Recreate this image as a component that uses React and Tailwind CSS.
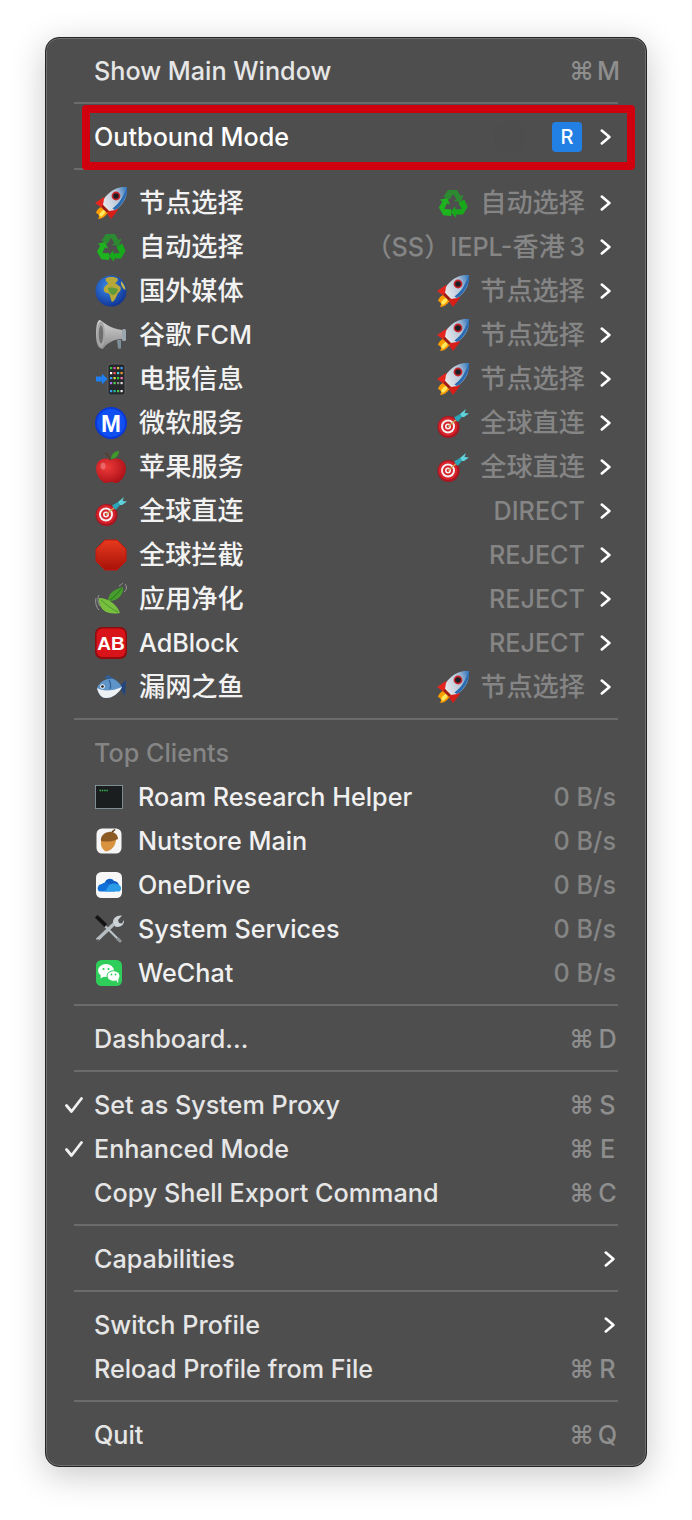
import React from 'react';

const Rocket = () => (
  <svg viewBox="0 0 32 32" className="w-8 h-8 shrink-0">
    <defs>
      <linearGradient id="rk" x1="0" y1="0.6" x2="1" y2="0.2">
        <stop offset="0" stopColor="#e3e6ea" />
        <stop offset="0.6" stopColor="#b4c4d6" />
        <stop offset="1" stopColor="#3f7dbf" />
      </linearGradient>
    </defs>
    <path d="M0 16 L9 10 L13 14 L7 21 Z" fill="#e5261f" />
    <path d="M16 32 L23 23 L19 19 L11 25 Z" fill="#d81e18" />
    <path d="M1 26 C2 22 6 19 10 19 L14 23 C13 27 8 32 3 32 C5 29 4 27 1 26 Z" fill="#ff9d00" />
    <path d="M4 28 C5 25 8 23 10 22 L11 24 C10 27 8 28 6 30 Z" fill="#ffe95c" />
    <path d="M32 0 C23 -1 14 4 9 12 L8 18 L14 24 L20 23 C28 18 33 10 32 0 Z" fill="url(#rk)" />
    <path d="M32 0 C32.500 8 28 18 20 23 L17.500 21.500 C25 16 29 8 32 0 Z" fill="#2a6bb2" />
    <circle cx="21" cy="9" r="4.400" fill="#c9242a" />
    <circle cx="21" cy="9" r="2.800" fill="#1d1d24" />
    <path d="M8 18 L14 24 L12 26 L6 20 Z" fill="#9c1c1a" />
  </svg>
);

const RecycleArrow = ({ fill, rotate }) => (
  <path
    d="M11 3 L20 3 L23.500 9 L26.500 7.500 L24 15 L16.500 14 L19.500 12.200 L16 7 L12.500 12.800 L6.500 9.500 Z"
    fill={fill}
    transform={`rotate(${rotate} 16 17)`}
  />
);

const Recycle = () => (
  <svg viewBox="0 0 32 32" className="w-8 h-8 shrink-0">
    <RecycleArrow fill="#2c8b31" rotate={0} />
    <RecycleArrow fill="#17a81b" rotate={120} />
    <RecycleArrow fill="#1eb41f" rotate={240} />
  </svg>
);

const Globe = () => (
  <svg viewBox="0 0 32 32" className="w-8 h-8 shrink-0">
    <defs>
      <radialGradient id="gb" cx="0.4" cy="0.35" r="0.75">
        <stop offset="0" stopColor="#3a8ae8" />
        <stop offset="1" stopColor="#0b2a8c" />
      </radialGradient>
    </defs>
    <circle cx="16" cy="16" r="15.500" fill="url(#gb)" />
    <path d="M11 3 C14 1.500 19 1.500 22 3 C24 5 22 7 20 8 L24 11 C27 12 26 16 23 18 C21 22 20 26 17 27 C15 24 16 20 13 18 C10 18 8 16 9 13 C10 10 13 10 13 8 C11 7 10 5 11 3 Z" fill="#b8a83a" />
    <path d="M13 13 C16 12 20 13 23 14 C22 18 20 20 17 20 C15 18 13 16 13 13 Z" fill="#5f9a3a" />
    <path d="M26 6 C29 9 30.500 12 30.500 15 C28 14 26.500 11 26 9 Z" fill="#c2b24a" />
  </svg>
);

const Megaphone = () => (
  <svg viewBox="0 0 32 32" className="w-8 h-8 shrink-0">
    <defs>
      <linearGradient id="mg" x1="0" y1="0" x2="0" y2="1">
        <stop offset="0" stopColor="#d4d4d4" />
        <stop offset="1" stopColor="#8b8b8b" />
      </linearGradient>
    </defs>
    <path d="M22 21 L26 21 L26 29 C26 30 23 30 23 29 Z" fill="#7f8f99" />
    <path d="M5 1 C8 3 16 10 27 11 L28 20 C18 20 11 25 8 30 C3 30 1 24 1 16 C1 8 2 1 5 1 Z" fill="url(#mg)" />
    <ellipse cx="6" cy="15.500" rx="4" ry="13" fill="#a5a5a5" />
    <ellipse cx="6" cy="15.500" rx="2.200" ry="9" fill="#6f6f6f" />
    <rect x="27" y="10" width="4" height="12" rx="1.500" fill="#9aa7ae" />
  </svg>
);

const phoneDots = ['#2ecc40', '#e04bb0', '#e0c040', '#3aa0ff', '#ffffff', '#ff5050', '#3ad0d0', '#f0a030', '#3aa0ff', '#e0e040', '#2ecc40', '#ff70b0', '#b070ff', '#50d050', '#888888', '#dddddd', '#3aa0ff', '#20c0a0', '#50c050', '#eeeeee'];

const Phone = () => (
  <svg viewBox="0 0 32 32" className="w-8 h-8 shrink-0">
    <rect x="13" y="1" width="17" height="31" rx="2.500" fill="#26282b" stroke="#666" strokeWidth="0.8" />
    {phoneDots.map((c, i) => (
      <rect key={i} x={15 + (i % 4) * 3.5} y={4 + Math.floor(i / 4) * 5 + (i >= 16 ? 3 : 0)} width="2.2" height="2.2" fill={c} />
    ))}
    <path d="M1 13.500 L7 13.500 L7 10.500 L12.500 16 L7 21.500 L7 18.500 L1 18.500 Z" fill="#1f7ef0" />
  </svg>
);

const MCircle = () => (
  <svg viewBox="0 0 32 32" className="w-8 h-8 shrink-0">
    <circle cx="16" cy="16" r="16" fill="#0a37d8" />
    <circle cx="16" cy="16" r="14" fill="#1050f0" />
    <text x="16" y="24.500" textAnchor="middle" fontSize="24" fontWeight="900" fill="#fff" fontFamily="Liberation Sans, sans-serif">M</text>
  </svg>
);

const Apple = () => (
  <svg viewBox="0 0 32 32" className="w-8 h-8 shrink-0">
    <defs>
      <radialGradient id="ap" cx="0.35" cy="0.35" r="0.8">
        <stop offset="0" stopColor="#f03a3a" />
        <stop offset="1" stopColor="#a30c14" />
      </radialGradient>
    </defs>
    <path d="M16 9 C11 6 2 7 1 17 C1 25 7 32 11 32 C13 32 14 31 16 31 C18 31 19 32 21 32 C25 32 31 25 31 17 C30 7 21 6 16 9 Z" fill="url(#ap)" />
    <path d="M10 2 C12 3 14 5 15 9" stroke="#5c3a1c" strokeWidth="1.2" fill="none" />
    <path d="M16 8 C16 3 20 0 24 0 C24 4 21 8 16 8 Z" fill="#3f9a2b" />
    <ellipse cx="8" cy="15" rx="2.500" ry="3.500" fill="#fff" opacity="0.25" />
  </svg>
);

const Dart = () => (
  <svg viewBox="0 0 32 32" className="w-8 h-8 shrink-0">
    <circle cx="11.500" cy="20" r="11" fill="#a81620" />
    <circle cx="11" cy="19.500" r="9.500" fill="#d8222c" />
    <circle cx="11" cy="19.500" r="7" fill="#f4f0f0" />
    <circle cx="11" cy="19.500" r="5" fill="#d8222c" />
    <circle cx="11" cy="19.500" r="3" fill="#f4f0f0" />
    <circle cx="11" cy="19.500" r="1.400" fill="#d8222c" />
    <path d="M11 19.500 L20 12" stroke="#c9a050" strokeWidth="1.3" />
    <path d="M17 10.500 L23 7 L25 10 L20.500 15 Z" fill="#2aa6b8" />
    <path d="M23 7 L29 2 L27.500 6 L32 6.500 L27 10 L25 10 Z" fill="#5fd4dc" />
  </svg>
);

const Stop = () => (
  <svg viewBox="0 0 32 32" className="w-8 h-8 shrink-0">
    <defs>
      <linearGradient id="st" x1="0" y1="0" x2="0" y2="1">
        <stop offset="0" stopColor="#e53a1e" />
        <stop offset="1" stopColor="#a81208" />
      </linearGradient>
    </defs>
    <polygon points="10,1 22,1 31,10 31,22 22,31 10,31 1,22 1,10" fill="url(#st)" stroke="#c8140c" strokeWidth="1" />
  </svg>
);

const Leaves = () => (
  <svg viewBox="0 0 32 32" className="w-8 h-8 shrink-0">
    <path d="M13 18 C13 10 20 6 28 4 C29 11 23 19 13 18 Z" fill="#479e2d" />
    <path d="M15 17 C19 14 23 10 27 5" stroke="#1f6a1c" strokeWidth="0.8" fill="none" />
    <path d="M4 15 C3 24 10 33 25 30 C22 22 14 15 4 15 Z" fill="#78bf40" />
    <path d="M6 17 C11 21 16 26 23 29" stroke="#3d8a26" strokeWidth="0.8" fill="none" />
    <path d="M24 3 C26 2 27 1 28 0 M29 9 C32 7 32 3 30 1 M1 15 C0 19 1 24 4 27 M4 12 C2 16 3 20 5 23" stroke="#9a9a9a" strokeWidth="1" fill="none" />
  </svg>
);

const AdBlockIcon = () => (
  <svg viewBox="0 0 32 32" className="w-8 h-8 shrink-0">
    <rect width="32" height="32" rx="7" fill="#8f0c0e" />
    <rect x="1.500" y="1.500" width="29" height="28.500" rx="6" fill="#d8141a" />
    <text x="16" y="23" textAnchor="middle" fontSize="19" fontWeight="900" fill="#fff" fontFamily="Liberation Sans, sans-serif">AB</text>
  </svg>
);

const Fish = () => (
  <svg viewBox="0 0 32 32" className="w-8 h-8 shrink-0">
    <path d="M24 16 L31 9 L30 25 Z" fill="#24457c" />
    <path d="M9 7 L13 4 L21 9 Z" fill="#2f5f9a" />
    <path d="M2 17 C5 10 12 7 18 8 C22 9 25 13 27 16 C24 22 18 27 11 27 C6 27 3 22 2 17 Z" fill="#5f94c8" />
    <path d="M2 17 C7 20 16 21 27 16 C24 22 18 27 11 27 C6 27 3 22 2 17 Z" fill="#eef1f4" />
    <path d="M14 9 C16 12 16 15 15 18" stroke="#33609a" strokeWidth="1.2" fill="none" />
    <circle cx="7.500" cy="15.500" r="2.300" fill="#fff" />
    <circle cx="7.500" cy="15.500" r="1.300" fill="#111" />
  </svg>
);

const Terminal = () => (
  <svg viewBox="0 0 28 28" className="w-7 h-7 shrink-0">
    <rect x="0.500" y="2.500" width="27" height="23" fill="#1b1e1e" stroke="#8fa3a8" strokeWidth="0.8" />
    <path d="M4.500 7.500 H13.500" stroke="#37b24d" strokeWidth="1.600" strokeDasharray="1.500 0.800" />
  </svg>
);

const Acorn = () => (
  <svg viewBox="0 0 28 28" className="w-7 h-7 shrink-0">
    <rect x="1.500" y="1.500" width="25" height="25" rx="5.500" fill="#f5f5f5" />
    <path d="M6.500 12 C4.500 18 7.500 23 11 24.500 C16 24 20.500 19 21 13 Z" fill="#d9923e" />
    <path d="M6 14 C5 9 10 5 14 5 C18 4 23 7 23 12 C17 15 11 15 6 14 Z" fill="#8c5a24" />
    <path d="M17 5 L20 2.500" stroke="#5c3512" strokeWidth="1.600" />
  </svg>
);

const OneDrive = () => (
  <svg viewBox="0 0 28 28" className="w-7 h-7 shrink-0">
    <rect x="1" y="1" width="26" height="26" rx="5.500" fill="#f7f7f7" />
    <path d="M10 11 C12 7 17 7 19 10 C21 10 23 11 24 14 L11 17 Z" fill="#0f5ec4" />
    <path d="M3 19 C2 16 4 13 7 13 C9 11 12 11 14 13 L20 20.500 L6 20.500 C4.500 20.500 3.500 20 3 19 Z" fill="#1070d8" />
    <path d="M14 14 C17 12 21 12 24 14 C26 15 27 18 25 20 C24.500 20.500 24 20.500 23 20.500 L10 20.500 Z" fill="#2b9be8" />
  </svg>
);

const Tools = () => (
  <svg viewBox="0 0 30 30" className="w-[30px] h-[30px] shrink-0">
    <path d="M11 12 L26 27" stroke="#bcc3c7" strokeWidth="2.200" />
    <path d="M1 3.500 L3.500 1 L13 10 L10.500 13 Z" fill="#111111" stroke="#333" strokeWidth="0.6" />
    <path d="M23 24 L27 28" stroke="#8c9498" strokeWidth="3" />
    <path d="M22 8 L3 26" stroke="#b6bec2" strokeWidth="3.400" />
    <path d="M3 26 L5 28" stroke="#555" strokeWidth="3" />
    <path d="M19 8 C19 4 23 1 28 1.500 L24 6 L25 9 L28 9.500 L30 6 C30.500 11 26 14 21 12.500 Z" fill="#ccd4d8" />
  </svg>
);

const WeChat = () => (
  <svg viewBox="0 0 28 28" className="w-7 h-7 shrink-0">
    <rect x="1" y="1" width="26" height="26" rx="5.500" fill="#2fce5a" />
    <ellipse cx="11" cy="11.500" rx="8" ry="6.500" fill="#fff" />
    <path d="M6 15 L5.500 19.500 L10 17 Z" fill="#fff" />
    <ellipse cx="18.500" cy="17" rx="6.500" ry="5.300" fill="#fff" stroke="#2fce5a" strokeWidth="1" />
    <path d="M21 21 L23 24 L23.500 20 Z" fill="#fff" />
    <circle cx="8.500" cy="10" r="1.100" fill="#2fce5a" />
    <circle cx="13.500" cy="10" r="1.100" fill="#2fce5a" />
    <circle cx="16.500" cy="15.500" r="0.900" fill="#2fce5a" />
    <circle cx="20.500" cy="15.500" r="0.900" fill="#2fce5a" />
  </svg>
);

const Chevron = () => (
  <svg viewBox="0 0 11 16" className="w-[11px] h-4 shrink-0" fill="none" stroke="#ffffff" strokeWidth="2.600" strokeLinecap="round" strokeLinejoin="round">
    <path d="M1.800 1.600 L9.400 8 L1.800 14.400" />
  </svg>
);

const Check = () => (
  <svg viewBox="0 0 18 16" className="absolute left-[19px] w-[18px] h-4" fill="none" stroke="#f0f0f0" strokeWidth="2.800" strokeLinecap="round" strokeLinejoin="round">
    <path d="M1.500 8.500 L6.500 14.500 L16.500 1.500" />
  </svg>
);

const Separator = () => (
  <div className="h-[22px] pt-[10px] px-[28px]">
    <div className="h-[2px] bg-[#6b6b6b]" />
  </div>
);

// CJK runs sit a little larger than the Latin text around them
const Label = ({ text }) =>
  text.split(/([\u4e00-\u9fff（）]+)/).map((part, i) =>
    i % 2 ? <span key={i} className="text-[26.2px]">{part}</span> : part
  );

const Shortcut = ({ k }) => (
  <span className="flex items-center gap-[3px] text-[#8e8e8e]">
    <span className="text-[25px] font-medium">⌘</span>
    <span className="w-[21px] text-center">{k}</span>
  </span>
);

const MenuItem = ({ label, shortcut, checked, arrow }) => (
  <div className={`relative h-11 pt-[2px] flex items-center justify-between pl-[48px] ${arrow ? 'pr-[31px]' : 'pr-[28px]'}`}>
    {checked && <Check />}
    <span className="text-[#e6e6e6]">{label}</span>
    {shortcut && <Shortcut k={shortcut} />}
    {arrow && <Chevron />}
  </div>
);

const ProxyRow = ({ Icon, name, ValueIcon, value }) => (
  <div className="h-11 pt-[2px] flex items-center pl-[49px] pr-[35px]">
    <Icon />
    <span className="ml-[12px] text-[#f2f2f2]"><Label text={name} /></span>
    <span className="ml-auto flex items-center text-[#858585] whitespace-pre">
      {ValueIcon && <span className="mr-[11px] flex"><ValueIcon /></span>}
      <span><Label text={value} /></span>
    </span>
    <span className="ml-[15px] flex"><Chevron /></span>
  </div>
);

const ClientRow = ({ Icon, name }) => (
  <div className="h-11 pt-[2px] flex items-center pl-[49px] pr-[30px]">
    <span className="w-7 flex justify-center"><Icon /></span>
    <span className="ml-[15px] text-[#f0f0f0]">{name}</span>
    <span className="ml-auto text-[#858585]">0 B/s</span>
  </div>
);

const proxies = [
  { Icon: Rocket, name: '节点选择', ValueIcon: Recycle, value: '自动选择' },
  { Icon: Recycle, name: '自动选择', value: '（SS）IEPL-香港\u20093' },
  { Icon: Globe, name: '国外媒体', ValueIcon: Rocket, value: '节点选择' },
  { Icon: Megaphone, name: '谷歌\u2009FCM', ValueIcon: Rocket, value: '节点选择' },
  { Icon: Phone, name: '电报信息', ValueIcon: Rocket, value: '节点选择' },
  { Icon: MCircle, name: '微软服务', ValueIcon: Dart, value: '全球直连' },
  { Icon: Apple, name: '苹果服务', ValueIcon: Dart, value: '全球直连' },
  { Icon: Dart, name: '全球直连', value: 'DIRECT' },
  { Icon: Stop, name: '全球拦截', value: 'REJECT' },
  { Icon: Leaves, name: '应用净化', value: 'REJECT' },
  { Icon: AdBlockIcon, name: 'AdBlock', value: 'REJECT' },
  { Icon: Fish, name: '漏网之鱼', ValueIcon: Rocket, value: '节点选择' },
];

const clients = [
  { Icon: Terminal, name: 'Roam Research Helper' },
  { Icon: Acorn, name: 'Nutstore Main' },
  { Icon: OneDrive, name: 'OneDrive' },
  { Icon: Tools, name: 'System Services' },
  { Icon: WeChat, name: 'WeChat' },
];

const App = () => {
  return (
    <div className="w-[692px] h-[1520px] bg-white overflow-hidden pt-[37px] pl-[45px] font-['Inter','Noto_Sans_CJK_SC','DejaVu_Sans',sans-serif] text-[25.2px] font-[450] leading-[26px]">
      <div className="w-[602px] h-[1430px] pt-[10px] rounded-[14px] border border-[#242424] bg-[#4e4e4e] shadow-[inset_0_0_0_1px_#6f6f6f,0_8px_34px_rgba(0,0,0,0.22)]">
        <MenuItem label="Show Main Window" shortcut="M" />
        <Separator />

        <div className="relative h-11 pt-[2px] flex items-center pl-[48px] pr-[35px]">
          <span className="text-white">Outbound Mode</span>
          <span className="ml-auto w-8 h-8 rounded-full bg-[#4c4d4c] mr-[26px]" />
          <span className="w-[30px] h-[30px] rounded-[4px] bg-[#2280e5] flex items-center justify-center text-white text-[20px] font-medium">R</span>
          <span className="ml-[18px] flex"><Chevron /></span>
          <div className="absolute left-[36px] right-[11px] top-[-9px] bottom-[-12px] border-[8px] border-[#d0000f] rounded-[4px]" />
        </div>
        <Separator />

        {proxies.map((p) => (
          <ProxyRow key={p.name} {...p} />
        ))}
        <Separator />

        <div className="h-11 pt-[2px] flex items-center pl-[48px] text-[#858585]">Top Clients</div>
        {clients.map((c) => (
          <ClientRow key={c.name} {...c} />
        ))}
        <Separator />

        <MenuItem label="Dashboard..." shortcut="D" />
        <Separator />

        <MenuItem label="Set as System Proxy" shortcut="S" checked />
        <MenuItem label="Enhanced Mode" shortcut="E" checked />
        <MenuItem label="Copy Shell Export Command" shortcut="C" />
        <Separator />

        <MenuItem label="Capabilities" arrow />
        <Separator />

        <MenuItem label="Switch Profile" arrow />
        <MenuItem label="Reload Profile from File" shortcut="R" />
        <Separator />

        <MenuItem label="Quit" shortcut="Q" />
      </div>
    </div>
  );
};

export default App;
